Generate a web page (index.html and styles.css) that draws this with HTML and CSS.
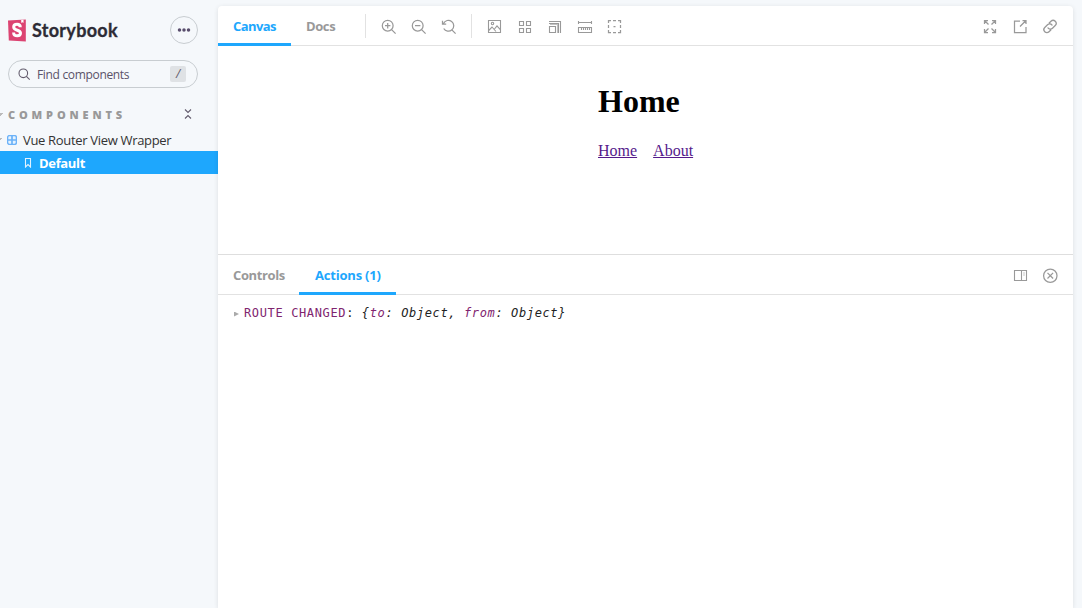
FILE: index.html
```html
<!DOCTYPE html>
<html lang="en">
<head>
<meta charset="utf-8">
<title>Storybook</title>
<link rel="stylesheet" href="styles.css">
</head>
<body>
<div class="app">
  <aside class="sidebar">
    <header class="brand">
      <svg class="logo" width="18" height="23" viewBox="0 0 18 23"><path fill="#dc4472" d="M0 1.600 17.800.500V22.600L.8 21.600Z"/><path fill="#fff" d="M13.200 1 15.500.800v3.200l-1-.8-1.200.9Z"/><path fill="none" stroke="#fff" stroke-width="3" d="M12.300 8.300c0-2.100-1.100-3-3.200-3S5.700 6.500 5.700 8c0 3.900 6.800 2.600 6.800 6.100 0 1.800-1.200 2.700-3.300 2.700-2.300 0-3.600-1-3.600-3.200"/></svg>
      <span class="brand-name">Storybook</span>
      <button class="menu" aria-label="Menu"><svg width="14" height="4" viewBox="0 0 14 4"><g fill="#584d6c"><circle cx="2.5" cy="2" r="1.75"/><circle cx="7" cy="2" r="1.75"/><circle cx="11.5" cy="2" r="1.75"/></g></svg></button>
    </header>
    <div class="search">
      <svg class="line dark" width="13" height="13" viewBox="0 0 13 13"><circle cx="5.3" cy="5.3" r="4.3"/><path d="m8.400 8.400 3.300 3.300"/></svg>
      <span class="search-text">Find components</span>
      <span class="key">/</span>
    </div>
    <div class="section">
      <span class="caret"></span><span class="section-name">COMPONENTS</span>
      <svg class="line dark" width="8" height="10" viewBox="0 0 8 10"><path d="m1 .5 3 3 3-3M1 9.500l3-3 3 3"/></svg>
    </div>
    <div class="node">
      <span class="caret"></span>
      <svg width="10" height="10" viewBox="0 0 10 10"><rect x=".6" y=".6" width="8.8" height="8.8" rx="1.8" fill="#e5f3ff" stroke="#6cb2f8" stroke-width="1.4"/><path d="M5 1v8M1 5h8" stroke="#6cb2f8" stroke-width="1.7"/></svg>
      <span class="node-name">Vue Router View Wrapper</span>
    </div>
    <div class="story">
      <svg width="8" height="10" viewBox="0 0 8 10"><path d="M1.500.500h5v8.500L4 6.500 1.500 9Z" fill="none" stroke="#e0f2ff" stroke-width="1.100"/></svg>
      <span class="story-name">Default</span>
    </div>
  </aside>
  <main class="panel">
    <nav class="bar">
      <span class="tab active canvas"><span>Canvas</span></span>
      <span class="tab docs"><span>Docs</span></span>
      <i class="divider first"></i>
      <div class="tools zoom">
        <svg class="line bold" width="16" height="16" viewBox="0 0 16 16"><circle cx="6.7" cy="6.7" r="5.4"/><path d="m10.6 10.6 4 4M6.7 4v5.4M4 6.7h5.4"/></svg>
        <svg class="line bold" width="16" height="16" viewBox="0 0 16 16"><circle cx="6.7" cy="6.7" r="5.4"/><path d="m10.6 10.6 4 4M4 6.7h5.4"/></svg>
        <svg class="line bold" width="16" height="16" viewBox="0 0 16 16"><path d="M2.5 4.4a5.4 5.4 0 1 1 .2 5.1M1.5 1.7v3.5h3.7M10.6 10.6l4 4"/></svg>
      </div>
      <i class="divider second"></i>
      <div class="tools">
        <svg class="line" width="16" height="16" viewBox="0 0 16 16"><path d="M1.5 1.5h12v12h-12ZM1.700 11.500l3.300-3.500 4 4.500M7.500 10l2.500-3.200 3.500 4"/><circle cx="5.500" cy="4.500" r="1.200"/></svg>
        <svg class="line" width="16" height="16" viewBox="0 0 16 16"><path d="M2.500 2.500h4v4h-4ZM9.500 2.500h4v4h-4ZM2.500 9.500h4v4h-4ZM9.500 9.500h4v4h-4Z"/></svg>
        <svg class="line" width="16" height="16" viewBox="0 0 16 16"><path d="M2.500 7.500h6v6h-6ZM2 4.500h9.500V14M2 2.500h11.500V14"/><path opacity=".6" d="M3 5.500h7.500V14"/></svg>
        <svg class="line" width="16" height="16" viewBox="0 0 16 16"><path d="M1.500 2v3M14.500 2v3M1.500 3.500h13M1.500 8.500h13v5h-13ZM4.500 9v2M6.500 9v2M8.500 9v2M10.500 9v2M12.500 9v2"/></svg>
        <svg class="line bold" width="16" height="16" viewBox=".5 .5 16 16"><path d="M2 4.500V2h2.500M6.500 2h3M11.500 2H14v2.500M14 6.500v3M14 11.500V14h-2.500M9.500 14h-3M4.500 14H2v-2.500M2 9.500v-3M7 8h2"/></svg>
      </div>
      <div class="tools end">
        <svg class="line bold" width="16" height="16" viewBox="0 0 16 16"><path d="M2.500 5V1.500H6M10 1.500h3.500V5M13.500 10v3.500H10M6 13.500H2.500V10M2.500 1.500l4 4M13.500 1.500l-4 4M13.500 13.500l-4-4M2.500 13.500l4-4"/></svg>
        <svg class="line bold" width="16" height="16" viewBox="0 0 16 16"><path d="M8 2H2.500v11.500H14V8M10.500 1.500H14V5M14 1.500 8 7.500"/></svg>
        <svg class="line" width="16" height="16" viewBox="0 0 16 16"><g transform="translate(0 -.500) rotate(-45 8 8)"><path stroke-width="1.300" d="M6.500 11H3.600a3 3 0 0 1 0-6h3.900a3 3 0 0 1 2.900 3.900M9.500 5h2.900a3 3 0 0 1 0 6H8.500a3 3 0 0 1-2.900-3.900"/></g></svg>
      </div>
    </nav>
    <section class="preview">
      <div class="page"><h1>Home</h1><p><a>Home</a><a>About</a></p></div>
    </section>
    <nav class="bar addons">
      <span class="tab controls"><span>Controls</span></span>
      <span class="tab active actions"><span>Actions (1)</span></span>
      <div class="tools end">
        <svg class="line" width="16" height="16" viewBox="0 0 16 16"><path d="M2.500 2.500h12v10h-12ZM9.500 3v9M12 4.500v1M12 6.500v1"/></svg>
        <svg class="line bold" width="16" height="16" viewBox="0 0 16 16"><circle cx="8.300" cy="7.700" r="6.700"/><path d="m5.500 4.900 5.600 5.600M11.100 4.900l-5.600 5.600"/></svg>
      </div>
    </nav>
    <div class="log"><span class="log-caret"></span><code><b>ROUTE CHANGED</b>: <i>{<em>to</em>: Object, <em>from</em>: Object}</i></code></div>
  </main>
</div>
</body>
</html>
```
FILE: styles.css
```css
* { box-sizing: border-box; }
body { margin: 0; background: #f5f8fb; color: #333; font: 13px "Open Sans", "Noto Sans", sans-serif; overflow: hidden; }
svg { display: block; flex: none; }
.line { fill: none; stroke: #999; stroke-width: 1.1; }
.line.dark { stroke: #625b6c; }
.line.bold { stroke-width: 1.25; }
.app { display: flex; height: 608px; }
.sidebar { width: 218px; flex: none; }
.brand { display: flex; align-items: center; height: 28px; margin: 16px 20px 0 8px; }
.logo { margin-right: 6px; }
.brand-name { color: #2d2b35; font: 700 18px/28px Lato, sans-serif; letter-spacing: .3px; -webkit-text-stroke: .3px #2d2b35; }
.menu { margin-left: auto; width: 28px; height: 28px; padding: 0; border: 1px solid #c8cdd1; border-radius: 50%; background: none; display: grid; place-items: center; }
.search { display: flex; align-items: center; height: 28px; margin: 16px 20px 0 8px; padding: 0 11px 0 9px; border: 1px solid #c8cdd1; border-radius: 14px; color: #5a5268; font-size: 12px; }
.search-text { margin-left: 6px; letter-spacing: -.33px; }
.key { margin-left: auto; width: 16px; height: 16px; border-radius: 2px; background: #dfe2e5; color: #625b6c; text-align: center; font: italic 12px/16px "Open Sans", sans-serif; }
.section { display: flex; align-items: center; height: 16px; margin: 18px 26px 0 0; padding-top: 1px; }
.section .line { margin-left: auto; margin-top: -2px; }
.section-name { margin-left: 5px; color: #999; font-size: 11px; font-weight: 800; letter-spacing: 3.85px; }
.caret { width: 3px; height: 3px; flex: none; background: linear-gradient(135deg, #bbb 50%, transparent 50%); }
.node { display: flex; align-items: center; height: 23px; margin-top: 6px; }
.node svg { margin-left: 4px; }
.node-name { margin-left: 6px; white-space: nowrap; letter-spacing: -.32px; }
.story { display: flex; align-items: center; height: 23px; padding-left: 24px; background: #1ea7fd; color: #fff; font-weight: 700; letter-spacing: -.33px; }
.story-name { margin-left: 7px; }
.panel { width: 855px; height: 602px; margin-top: 6px; display: flex; flex-direction: column; background: #fff; border-radius: 4px 4px 0 0; box-shadow: 0 1px 5px rgba(0, 0, 0, .1); overflow: hidden; }
.bar { display: flex; align-items: center; height: 40px; flex: none; border-bottom: 1px solid #e2e2e2; color: #999; font-weight: 700; }
.addons { height: 41px; border-top: 1px solid #dedede; }
.tab { height: 40px; margin-bottom: -1px; padding: 0 15px; line-height: 40px; white-space: nowrap; }
.active { color: #1ea7fd; box-shadow: inset 0 -3px #1ea7fd; }
.canvas { width: 73px; letter-spacing: -.6px; }
.docs { width: 60px; letter-spacing: -.4px; }
.controls { width: 81px; letter-spacing: -.38px; }
.actions { width: 97px; padding-left: 16px; letter-spacing: -.2px; }
.divider { width: 1px; height: 24px; background: #e2e2e2; }
.first { margin-left: 14px; }
.second { margin: 0 15px 0 14px; }
.tools { display: flex; gap: 14px; margin-top: 3px; }
.zoom { margin-top: 2px; margin-left: 15px; }
.end { margin-left: auto; margin-right: 15px; }
.preview { height: 208px; display: flex; justify-content: center; font-family: "Liberation Serif", serif; color: #000; }
.page { width: 95px; }
h1 { margin: 37px 0 0; font-size: 32px; line-height: 37px; }
p { display: flex; gap: 16px; margin: 22px 0 0; font-size: 16px; line-height: 18px; }
a { color: #551a8b; text-decoration: underline; }
.log { display: flex; align-items: center; height: 36px; padding-left: 16px; }
.log-caret { width: 5px; height: 5px; margin-top: 2px; background: #aaa; clip-path: polygon(0 0, 100% 50%, 0 100%); }
code { margin-left: 5px; font: 12px "DejaVu Sans Mono", monospace; letter-spacing: .63px; white-space: pre; color: #222; }
code b, code em { font-weight: 400; color: #80246f; }
```
